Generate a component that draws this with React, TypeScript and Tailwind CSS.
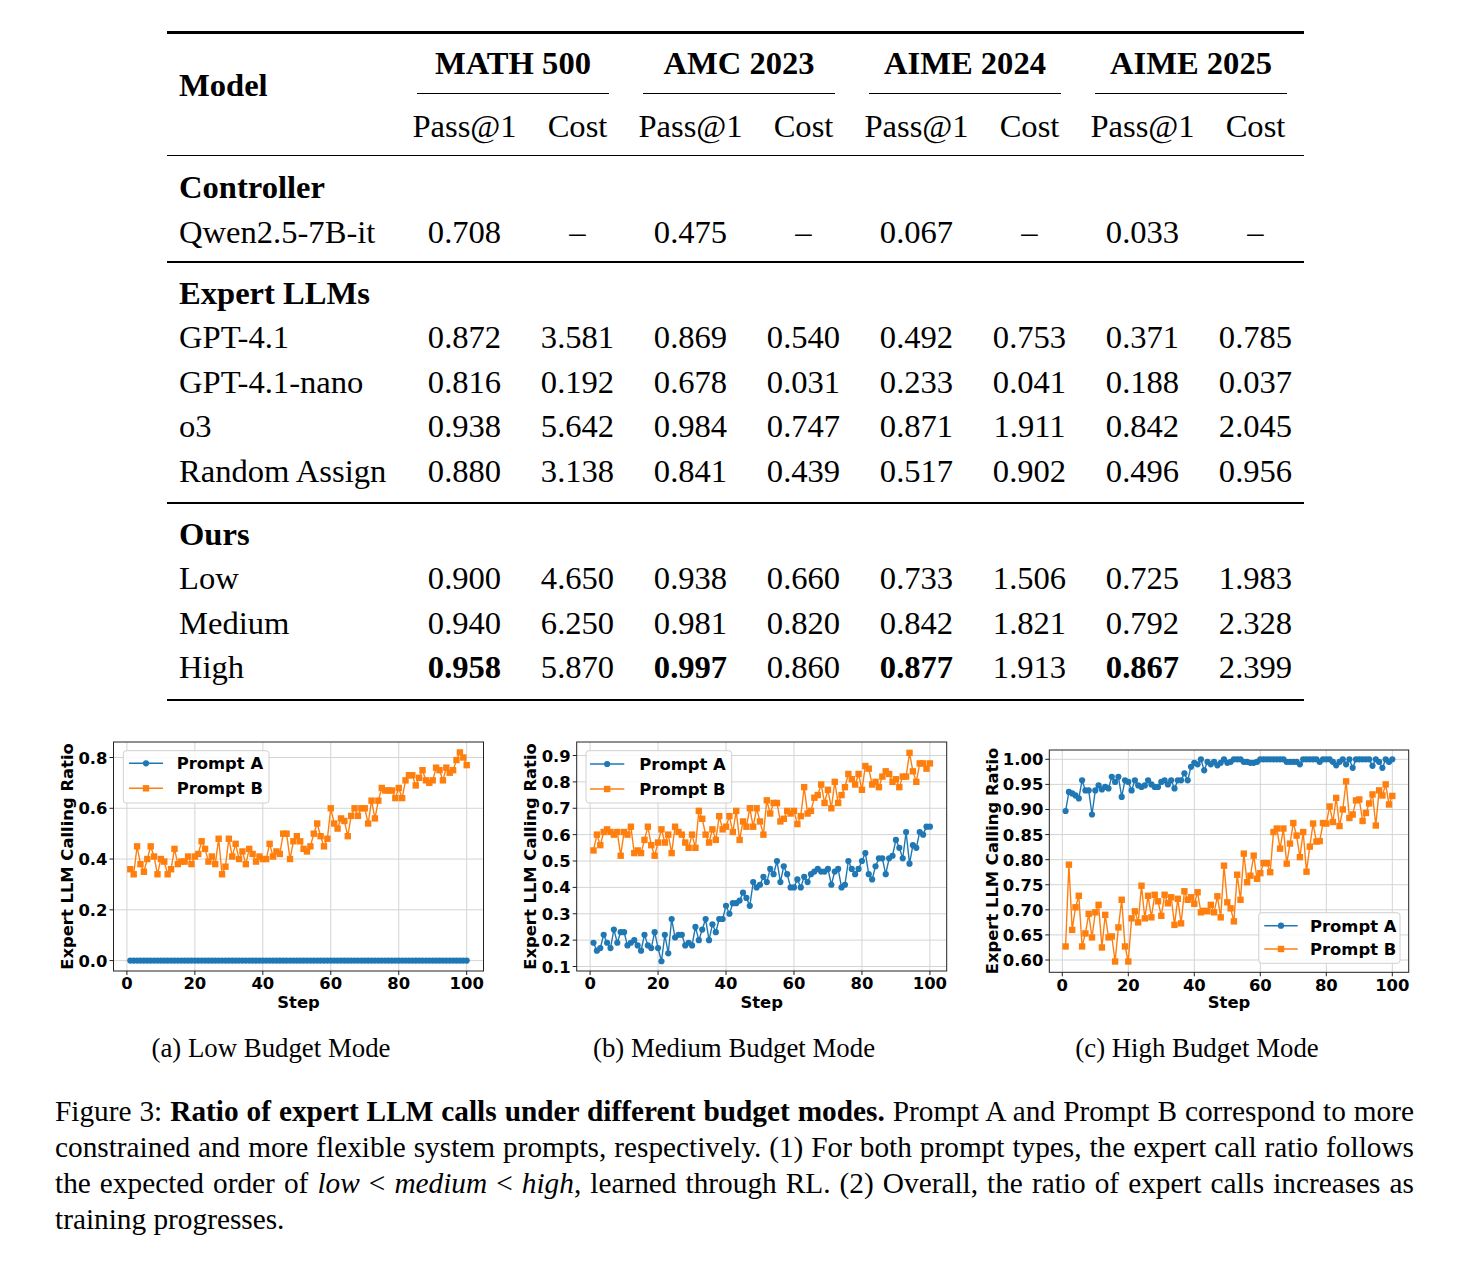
import React from 'react';

type Legend = { l: number; t: number; r: number; b: number; lineL: number; lineR: number; textX: number; row1: number; row2: number };
type ChartCfg = {
  frame: { l: number; r: number; t: number; b: number };
  x0: number; x100: number;
  yv1: number; yp1: number; yv2: number; yp2: number;
  yTicks: number[]; yDec: number;
  a: number[]; b: number[];
  legend: Legend;
  yLab: { x: number; y: number };
  xTickY: number; stepY: number;
};

const lowA = Array.from({ length: 100 }, () => 0);
const lowB = [
  0.36, 0.34, 0.45, 0.38, 0.35, 0.40, 0.45, 0.41, 0.34, 0.40,
  0.39, 0.34, 0.36, 0.44, 0.38, 0.39, 0.39, 0.41, 0.38, 0.41,
  0.42, 0.47, 0.44, 0.39, 0.41, 0.38, 0.48, 0.34, 0.37, 0.48,
  0.41, 0.46, 0.40, 0.43, 0.38, 0.44, 0.42, 0.39, 0.41, 0.40,
  0.40, 0.46, 0.41, 0.43, 0.42, 0.50, 0.50, 0.40, 0.47, 0.49,
  0.47, 0.44, 0.43, 0.45, 0.50, 0.54, 0.49, 0.45, 0.48, 0.60,
  0.54, 0.52, 0.56, 0.55, 0.49, 0.57, 0.60, 0.57, 0.60, 0.60,
  0.54, 0.63, 0.56, 0.63, 0.68, 0.67, 0.67, 0.67, 0.64, 0.68,
  0.64, 0.71, 0.73, 0.73, 0.69, 0.72, 0.75, 0.71, 0.70, 0.71,
  0.76, 0.75, 0.71, 0.76, 0.74, 0.75, 0.79, 0.82, 0.80, 0.77,
];
const medB = [
  0.54, 0.60, 0.56, 0.61, 0.62, 0.61, 0.60, 0.61, 0.52, 0.61,
  0.60, 0.63, 0.53, 0.54, 0.53, 0.58, 0.63, 0.56, 0.52, 0.57,
  0.62, 0.57, 0.60, 0.53, 0.63, 0.61, 0.60, 0.57, 0.55, 0.60,
  0.55, 0.69, 0.66, 0.60, 0.57, 0.62, 0.58, 0.67, 0.62, 0.63,
  0.67, 0.61, 0.69, 0.58, 0.65, 0.63, 0.70, 0.63, 0.70, 0.65,
  0.60, 0.73, 0.68, 0.72, 0.72, 0.65, 0.66, 0.69, 0.68, 0.69,
  0.64, 0.67, 0.78, 0.68, 0.69, 0.74, 0.75, 0.79, 0.72, 0.77,
  0.70, 0.80, 0.72, 0.75, 0.78, 0.83, 0.81, 0.79, 0.83, 0.77,
  0.86, 0.85, 0.79, 0.80, 0.78, 0.82, 0.84, 0.83, 0.80, 0.81,
  0.78, 0.82, 0.82, 0.91, 0.84, 0.80, 0.87, 0.87, 0.85, 0.87,
];
const medA = [
  0.19, 0.16, 0.17, 0.22, 0.19, 0.17, 0.24, 0.19, 0.23, 0.23,
  0.18, 0.19, 0.20, 0.18, 0.16, 0.22, 0.18, 0.17, 0.23, 0.17,
  0.12, 0.22, 0.15, 0.28, 0.21, 0.22, 0.22, 0.18, 0.19, 0.18,
  0.25, 0.20, 0.24, 0.28, 0.20, 0.26, 0.23, 0.28, 0.28, 0.33,
  0.30, 0.34, 0.34, 0.35, 0.38, 0.36, 0.33, 0.42, 0.40, 0.41,
  0.44, 0.42, 0.47, 0.45, 0.50, 0.42, 0.48, 0.45, 0.40, 0.40,
  0.43, 0.40, 0.44, 0.42, 0.45, 0.46, 0.47, 0.46, 0.46, 0.47,
  0.41, 0.46, 0.47, 0.40, 0.41, 0.50, 0.47, 0.45, 0.47, 0.50,
  0.53, 0.45, 0.43, 0.48, 0.51, 0.51, 0.45, 0.51, 0.52, 0.58,
  0.55, 0.51, 0.61, 0.49, 0.56, 0.55, 0.61, 0.60, 0.63, 0.63,
];
const highA = [
  0.897, 0.935, 0.932, 0.928, 0.922, 0.958, 0.938, 0.938, 0.890, 0.938,
  0.948, 0.940, 0.945, 0.942, 0.965, 0.955, 0.965, 0.925, 0.958, 0.955,
  0.938, 0.958, 0.948, 0.945, 0.948, 0.958, 0.950, 0.945, 0.945, 0.955,
  0.958, 0.950, 0.958, 0.942, 0.958, 0.958, 0.972, 0.958, 0.985, 0.993,
  0.990, 1.0, 0.978, 0.995, 0.990, 0.995, 0.988, 0.993, 1.0, 0.993,
  0.995, 1.0, 1.0, 1.0, 0.995, 0.995, 0.993, 0.993, 0.995, 1.0,
  1.0, 1.0, 1.0, 1.0, 1.0, 1.0, 1.0, 0.995, 0.995, 0.995,
  0.995, 0.990, 1.0, 1.0, 1.0, 1.0, 1.0, 0.995, 1.0, 1.0,
  1.0, 0.995, 0.988, 0.995, 1.0, 0.990, 1.0, 0.983, 1.0, 1.0,
  1.0, 1.0, 1.0, 0.987, 1.0, 0.995, 0.983, 1.0, 0.995, 1.0,
];
const highB = [
  0.627, 0.790, 0.660, 0.705, 0.728, 0.627, 0.653, 0.692, 0.645, 0.695,
  0.710, 0.625, 0.690, 0.645, 0.647, 0.597, 0.665, 0.720, 0.627, 0.597,
  0.683, 0.697, 0.675, 0.748, 0.683, 0.728, 0.685, 0.730, 0.717, 0.688,
  0.730, 0.713, 0.725, 0.670, 0.722, 0.673, 0.737, 0.720, 0.725, 0.712,
  0.735, 0.695, 0.698, 0.697, 0.710, 0.695, 0.727, 0.685, 0.788, 0.715,
  0.703, 0.677, 0.770, 0.720, 0.812, 0.755, 0.768, 0.808, 0.762, 0.773,
  0.793, 0.793, 0.775, 0.855, 0.862, 0.822, 0.862, 0.792, 0.832, 0.873,
  0.848, 0.805, 0.855, 0.776, 0.826, 0.872, 0.836, 0.837, 0.873, 0.872,
  0.906, 0.875, 0.923, 0.867, 0.900, 0.956, 0.883, 0.890, 0.918, 0.920,
  0.877, 0.893, 0.912, 0.930, 0.868, 0.938, 0.928, 0.950, 0.910, 0.927,
];

const charts: { cfg: ChartCfg; caption: string }[] = [
  {
    caption: '(a) Low Budget Mode',
    cfg: {
      frame: { l: 62.5, r: 432.5, t: 7, b: 236 },
      x0: 75.9, x100: 415.7,
      yv1: 0, yp1: 225.6, yv2: 0.8, yp2: 22.5,
      yTicks: [0, 0.2, 0.4, 0.6, 0.8], yDec: 1,
      a: lowA, b: lowB,
      legend: { l: 72.3, t: 15.7, r: 218, b: 68, lineL: 78, lineR: 112, textX: 125.7, row1: 28.3, row2: 53.3 },
      yLab: { x: 21.5, y: 121.5 },
      xTickY: 254, stepY: 273,
    },
  },
  {
    caption: '(b) Medium Budget Mode',
    cfg: {
      frame: { l: 62.7, r: 432.7, t: 7, b: 236 },
      x0: 76.1, x100: 415.9,
      yv1: 0.1, yp1: 231.5, yv2: 0.9, yp2: 20.5,
      yTicks: [0.1, 0.2, 0.3, 0.4, 0.5, 0.6, 0.7, 0.8, 0.9], yDec: 1,
      a: medA, b: medB,
      legend: { l: 72, t: 15.7, r: 217.7, b: 68, lineL: 76, lineR: 110.3, textX: 125.3, row1: 29, row2: 54 },
      yLab: { x: 21.5, y: 121.5 },
      xTickY: 254, stepY: 273,
    },
  },
  {
    caption: '(c) High Budget Mode',
    cfg: {
      frame: { l: 72.3, r: 431.7, t: 15, b: 237.3 },
      x0: 85.3, x100: 415.3,
      yv1: 0.6, yp1: 225, yv2: 1.0, yp2: 24.3,
      yTicks: [0.6, 0.65, 0.7, 0.75, 0.8, 0.85, 0.9, 0.95, 1.0], yDec: 2,
      a: highA, b: highB,
      legend: { l: 281.7, t: 177.7, r: 423, b: 228.3, lineL: 287.3, lineR: 320.7, textX: 333, row1: 190.7, row2: 214 },
      yLab: { x: 21, y: 126 },
      xTickY: 255.5, stepY: 273,
    },
  },
];

const BLUE = '#1f77b4';
const ORANGE = '#ff7f0e';

function Chart({ cfg }: { cfg: ChartCfg }) {
  const { frame, x0, x100, yv1, yp1, yv2, yp2, yTicks, yDec, a, b, legend, yLab, xTickY, stepY } = cfg;
  const X = (s: number) => x0 + (s / 100) * (x100 - x0);
  const Y = (v: number) => yp1 + ((v - yv1) * (yp2 - yp1)) / (yv2 - yv1);
  const xs = [0, 20, 40, 60, 80, 100];
  const path = (d: number[]) =>
    d.map((v, i) => `${i ? 'L' : 'M'}${X(i + 1).toFixed(2)},${Y(v).toFixed(2)}`).join('');
  const sq = 6.4;
  return (
    <svg width={440} height={280} className="block font-['DejaVu_Sans',sans-serif] font-bold text-[16.4px]">
      {xs.map((t) => (
        <line key={'gx' + t} x1={X(t)} x2={X(t)} y1={frame.t} y2={frame.b} stroke="#d4d4d4" strokeWidth={1} />
      ))}
      {yTicks.map((t) => (
        <line key={'gy' + t} x1={frame.l} x2={frame.r} y1={Y(t)} y2={Y(t)} stroke="#d4d4d4" strokeWidth={1} />
      ))}
      <path d={path(a)} fill="none" stroke={BLUE} strokeWidth={1.4} />
      {a.map((v, i) => (
        <circle key={'a' + i} cx={X(i + 1)} cy={Y(v)} r={3.1} fill={BLUE} />
      ))}
      <path d={path(b)} fill="none" stroke={ORANGE} strokeWidth={1.4} />
      {b.map((v, i) => (
        <rect key={'b' + i} x={X(i + 1) - sq / 2} y={Y(v) - sq / 2} width={sq} height={sq} fill={ORANGE} />
      ))}
      <rect
        x={frame.l}
        y={frame.t}
        width={frame.r - frame.l}
        height={frame.b - frame.t}
        fill="none"
        stroke="#222"
        strokeWidth={1}
      />
      {xs.map((t) => (
        <line key={'tx' + t} x1={X(t)} x2={X(t)} y1={frame.b} y2={frame.b + 4} stroke="#222" strokeWidth={1} />
      ))}
      {yTicks.map((t) => (
        <line key={'ty' + t} x1={frame.l - 4} x2={frame.l} y1={Y(t)} y2={Y(t)} stroke="#222" strokeWidth={1} />
      ))}
      {xs.map((t) => (
        <text key={'lx' + t} x={X(t)} y={xTickY} textAnchor="middle" fill="#000">
          {t}
        </text>
      ))}
      {yTicks.map((t) => (
        <text key={'ly' + t} x={frame.l - 6} y={Y(t) + 6} textAnchor="end" fill="#000">
          {t.toFixed(yDec)}
        </text>
      ))}
      <text x={(frame.l + frame.r) / 2} y={stepY} textAnchor="middle" fill="#000">
        Step
      </text>
      <text
        x={yLab.x}
        y={yLab.y}
        transform={`rotate(-90 ${yLab.x} ${yLab.y})`}
        textAnchor="middle"
        fill="#000"
      >
        Expert LLM Calling Ratio
      </text>
      <rect
        x={legend.l}
        y={legend.t}
        width={legend.r - legend.l}
        height={legend.b - legend.t}
        rx={3}
        fill="#ffffff"
        fillOpacity={0.85}
        stroke="#d0d0d0"
        strokeWidth={1}
      />
      <line x1={legend.lineL} x2={legend.lineR} y1={legend.row1} y2={legend.row1} stroke={BLUE} strokeWidth={1.4} />
      <circle cx={(legend.lineL + legend.lineR) / 2} cy={legend.row1} r={3.1} fill={BLUE} />
      <line x1={legend.lineL} x2={legend.lineR} y1={legend.row2} y2={legend.row2} stroke={ORANGE} strokeWidth={1.4} />
      <rect
        x={(legend.lineL + legend.lineR) / 2 - sq / 2}
        y={legend.row2 - sq / 2}
        width={sq}
        height={sq}
        fill={ORANGE}
      />
      <text x={legend.textX} y={legend.row1 + 6} fill="#000">
        Prompt A
      </text>
      <text x={legend.textX} y={legend.row2 + 6} fill="#000">
        Prompt B
      </text>
    </svg>
  );
}

type RowData = { label: string; vals: string[]; bold?: number[] };

const controller: RowData[] = [{ label: 'Qwen2.5-7B-it', vals: ['0.708', '–', '0.475', '–', '0.067', '–', '0.033', '–'] }];
const experts: RowData[] = [
  { label: 'GPT-4.1', vals: ['0.872', '3.581', '0.869', '0.540', '0.492', '0.753', '0.371', '0.785'] },
  { label: 'GPT-4.1-nano', vals: ['0.816', '0.192', '0.678', '0.031', '0.233', '0.041', '0.188', '0.037'] },
  { label: 'o3', vals: ['0.938', '5.642', '0.984', '0.747', '0.871', '1.911', '0.842', '2.045'] },
  { label: 'Random Assign', vals: ['0.880', '3.138', '0.841', '0.439', '0.517', '0.902', '0.496', '0.956'] },
];
const ours: RowData[] = [
  { label: 'Low', vals: ['0.900', '4.650', '0.938', '0.660', '0.733', '1.506', '0.725', '1.983'] },
  { label: 'Medium', vals: ['0.940', '6.250', '0.981', '0.820', '0.842', '1.821', '0.792', '2.328'] },
  { label: 'High', vals: ['0.958', '5.870', '0.997', '0.860', '0.877', '1.913', '0.867', '2.399'], bold: [0, 2, 4, 6] },
];

function Row({ r }: { r: RowData }) {
  return (
    <div className="grid grid-cols-[233px_129px_97px_129px_97px_129px_97px_129px_97px] h-[44.5px] leading-[44.5px]">
      <div className="pl-[12px] whitespace-nowrap">{r.label}</div>
      {r.vals.map((v, i) => (
        <div key={i} className={r.bold && r.bold.includes(i) ? 'text-center font-bold' : 'text-center'}>
          {v}
        </div>
      ))}
    </div>
  );
}

function SectionTitle({ title }: { title: string }) {
  return <div className="h-[44.5px] leading-[44.5px] pl-[12px] font-bold">{title}</div>;
}

export default function App() {
  const groups = ['MATH 500', 'AMC 2023', 'AIME 2024', 'AIME 2025'];
  return (
    <div className="w-[1476px] h-[1266px] bg-white text-black overflow-hidden font-['Liberation_Serif','Times_New_Roman',serif]">
      <div className="pt-[31px]">
        <div className="ml-[167px] w-[1137px] text-[32.6px]">
          <div className="h-[2.6px] bg-black" />
          <div className="grid grid-cols-[233px_129px_97px_129px_97px_129px_97px_129px_97px] grid-rows-[59px_1px_61px]">
            <div className="col-start-1 row-start-1 row-span-3 pl-[12px] pt-[29px] leading-[44px] font-bold">Model</div>
            {groups.map((g) => (
              <div key={g} className="col-span-2 text-center font-bold leading-[59px] whitespace-nowrap">
                {g}
              </div>
            ))}
            {groups.map((g) => (
              <div key={'r' + g} className="col-span-2 mx-[17px] bg-black" />
            ))}
            {groups.map((g) => (
              <React.Fragment key={'s' + g}>
                <div className="text-center pt-[3px] leading-[58px]">Pass@1</div>
                <div className="text-center pt-[3px] leading-[58px]">Cost</div>
              </React.Fragment>
            ))}
          </div>
          <div className="h-[1.6px] bg-black" />
          <div className="pt-[9px] pb-[7px]">
            <SectionTitle title="Controller" />
            {controller.map((r) => (
              <Row key={r.label} r={r} />
            ))}
          </div>
          <div className="h-[1.6px] bg-black" />
          <div className="pt-[8px] pb-[9px]">
            <SectionTitle title="Expert LLMs" />
            {experts.map((r) => (
              <Row key={r.label} r={r} />
            ))}
          </div>
          <div className="h-[1.6px] bg-black" />
          <div className="pt-[8px] pb-[9px]">
            <SectionTitle title="Ours" />
            {ours.map((r) => (
              <Row key={r.label} r={r} />
            ))}
          </div>
          <div className="h-[2.6px] bg-black" />
        </div>
      </div>

      <div className="mt-[33.5px] flex pl-[51px] gap-[23px]">
        {charts.map((c) => (
          <div key={c.caption} className="w-[440px] flex flex-col items-center">
            <Chart cfg={c.cfg} />
            <div className="mt-[17px] text-[26.8px] leading-[32px] whitespace-nowrap">{c.caption}</div>
          </div>
        ))}
      </div>

      <div className="mt-[29.5px] ml-[55px] w-[1359px] text-[29.3px] leading-[36px]">
        <div className="whitespace-nowrap text-justify [text-align-last:justify]">
          Figure 3: <span className="font-bold">Ratio of expert LLM calls under different budget modes.</span> Prompt A and
          Prompt B correspond to more
        </div>
        <div className="whitespace-nowrap text-justify [text-align-last:justify]">
          constrained and more flexible system prompts, respectively. (1) For both prompt types, the expert call ratio follows
        </div>
        <div className="whitespace-nowrap text-justify [text-align-last:justify]">
          the expected order of <span className="italic">low</span> &lt; <span className="italic">medium</span> &lt;{' '}
          <span className="italic">high</span>, learned through RL. (2) Overall, the ratio of expert calls increases as
        </div>
        <div className="whitespace-nowrap">training progresses.</div>
      </div>
    </div>
  );
}
